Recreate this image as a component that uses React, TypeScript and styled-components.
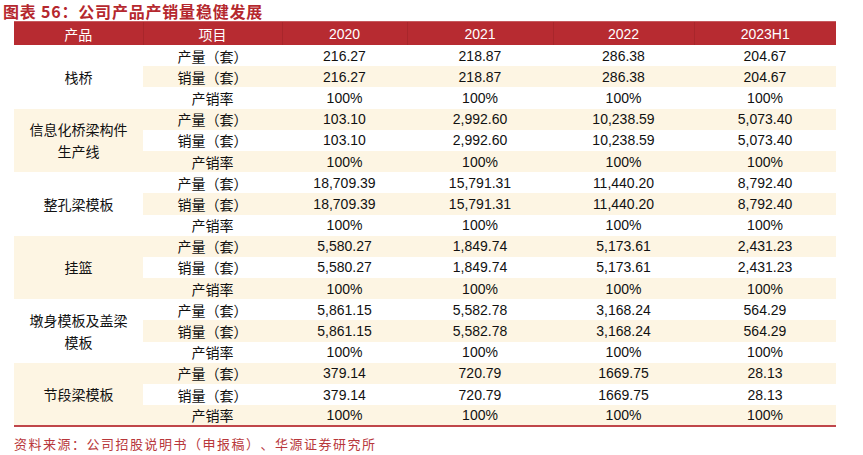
import React from 'react';
import styled, { createGlobalStyle } from 'styled-components';

interface Group {
  name: React.ReactNode;
  output: string[];
  sales: string[];
}

const groups: Group[] = [
  {
    name: '栈桥',
    output: ['216.27', '218.87', '286.38', '204.67'],
    sales: ['216.27', '218.87', '286.38', '204.67'],
  },
  {
    name: (
      <>
        信息化桥梁构件
        <br />
        生产线
      </>
    ),
    output: ['103.10', '2,992.60', '10,238.59', '5,073.40'],
    sales: ['103.10', '2,992.60', '10,238.59', '5,073.40'],
  },
  {
    name: '整孔梁模板',
    output: ['18,709.39', '15,791.31', '11,440.20', '8,792.40'],
    sales: ['18,709.39', '15,791.31', '11,440.20', '8,792.40'],
  },
  {
    name: '挂篮',
    output: ['5,580.27', '1,849.74', '5,173.61', '2,431.23'],
    sales: ['5,580.27', '1,849.74', '5,173.61', '2,431.23'],
  },
  {
    name: (
      <>
        墩身模板及盖梁
        <br />
        模板
      </>
    ),
    output: ['5,861.15', '5,582.78', '3,168.24', '564.29'],
    sales: ['5,861.15', '5,582.78', '3,168.24', '564.29'],
  },
  {
    name: '节段梁模板',
    output: ['379.14', '720.79', '1669.75', '28.13'],
    sales: ['379.14', '720.79', '1669.75', '28.13'],
  },
];

const years = ['2020', '2021', '2022', '2023H1'];
const colWidths = [129, 139, 125, 146, 141, 142];

const App: React.FC = () => {
  let rowIndex = 0;
  const nextShade = () => rowIndex++ % 2 === 1;

  return (
    <Page>
      <GlobalStyle />
      <Title>图表 56：公司产品产销量稳健发展</Title>
      <Table>
        <colgroup>
          {colWidths.map((w, i) => (
            <col key={i} style={{ width: w }} />
          ))}
        </colgroup>
        <thead>
          <tr>
            <Th>产品</Th>
            <Th>项目</Th>
            {years.map((y) => (
              <Th key={y} $latin>
                {y}
              </Th>
            ))}
          </tr>
        </thead>
        <tbody>
          {groups.map((g, gi) => {
            const rows = [
              { label: '产量（套）', values: g.output },
              { label: '销量（套）', values: g.sales },
              { label: '产销率', values: ['100%', '100%', '100%', '100%'] },
            ];
            return rows.map((r, ri) => {
              const shaded = nextShade();
              return (
                <Tr key={`${gi}-${ri}`} $shaded={shaded}>
                  {ri === 0 && (
                    <NameCell rowSpan={3} $shaded={gi % 2 === 1}>
                      {g.name}
                    </NameCell>
                  )}
                  <ItemCell>{r.label}</ItemCell>
                  {r.values.map((v, vi) => (
                    <ValueCell key={vi}>{v}</ValueCell>
                  ))}
                </Tr>
              );
            });
          })}
        </tbody>
      </Table>
      <Source>资料来源：公司招股说明书（申报稿）、华源证券研究所</Source>
    </Page>
  );
};

export default App;

const GlobalStyle = createGlobalStyle`
  body {
    margin: 0;
    background: #ffffff;
    text-spacing-trim: space-all;
  }
`;

const Page = styled.div`
  width: 863px;
  height: 455px;
  padding: 0 0 0 14px;
  box-sizing: border-box;
  font-family: 'Liberation Sans', 'Noto Sans CJK SC', sans-serif;
  color: #111111;
  text-spacing-trim: space-all;
`;

const Title = styled.div`
  height: 21px;
  margin-left: -11px;
  font-family: 'Noto Sans CJK SC', sans-serif;
  font-weight: 700;
  font-size: 16px;
  line-height: 22px;
  letter-spacing: 0.8px;
  color: #b5282e;
`;

const Table = styled.table`
  width: 822px;
  border-collapse: collapse;
  table-layout: fixed;
  border-bottom: 2px solid #c0464a;
`;

const Th = styled.th<{ $latin?: boolean }>`
  height: 23px;
  padding: 0;
  background: #b72b31;
  color: #ffffff;
  font-weight: 400;
  font-size: 14px;
  font-family: ${({ $latin }) =>
    $latin ? "'Liberation Sans', sans-serif" : "'Noto Sans CJK SC', sans-serif"};
  border-left: 1px solid #a8262b;
  border-top: 1px solid #c65a5e;
  text-align: center;
  &:first-child {
    border-left: none;
  }
`;

const Tr = styled.tr<{ $shaded: boolean }>`
  height: 21.2px;
  background: ${({ $shaded }) => ($shaded ? '#fdf5e3' : '#ffffff')};
`;

const NameCell = styled.td<{ $shaded: boolean }>`
  padding: 0;
  text-align: center;
  font-family: 'Noto Sans CJK SC', sans-serif;
  font-size: 14px;
  line-height: 22px;
  background: ${({ $shaded }) => ($shaded ? '#fdf5e3' : '#ffffff')};
`;

const ItemCell = styled.td`
  padding: 0;
  text-align: center;
  font-family: 'Noto Sans CJK SC', sans-serif;
  font-size: 14px;
  line-height: 20px;
`;

const ValueCell = styled.td`
  padding: 0;
  text-align: center;
  font-family: 'Liberation Sans', sans-serif;
  font-size: 14px;
  line-height: 20px;
`;

const Source = styled.div`
  margin-top: 7px;
  font-family: 'Noto Sans CJK SC', sans-serif;
  font-size: 13px;
  letter-spacing: 1.5px;
  color: #b8373b;
`;
